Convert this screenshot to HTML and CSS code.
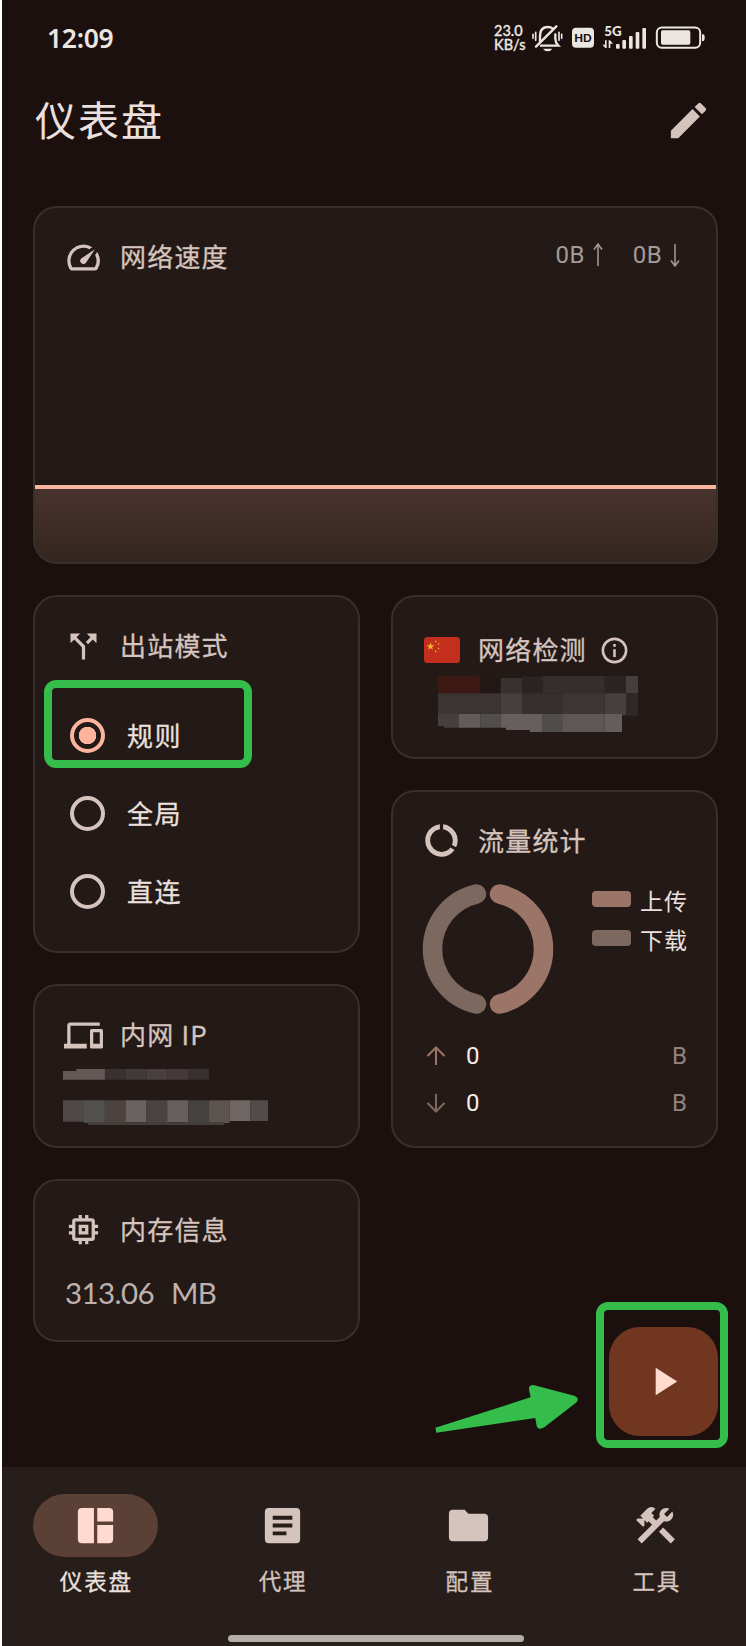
FILE: index.html
```html
<!DOCTYPE html>
<html lang="zh-CN">
<head>
<meta charset="utf-8">
<title>仪表盘</title>
<link rel="stylesheet" href="styles.css">
</head>
<body>
<div class="screen">
  <header class="status">
    <span class="clock">12:09</span>
    <span class="rate"><span>23.0</span><span>KB/s</span></span>
    <svg class="status-icons" viewBox="180 70 525 90" width="175" height="30">
      <g fill="none" stroke="#ebe7e0" stroke-width="5" stroke-linecap="round">
        <path d="M186 104v12M194 98v24M264 98v24M272 104v12"/>
        <path d="M207 126V108C207 91 216 82 231 82c6 0 11 2 15 5M210 138h52c-7-7-9-13-9-20v-14" stroke-width="7"/>
        <path d="M195 141 256 80" stroke-width="7"/>
      </g>
      <path d="M216 147h28q-5 8-14 8t-14-8z" fill="#ebe7e0"/>
      <rect x="303" y="84" width="66" height="60" rx="12" fill="#ebe7e0"/>
      <text x="336" y="126" text-anchor="middle" class="hd">HD</text>
      <text x="400" y="109" class="five-g">5G</text>
      <g fill="#ebe7e0">
        <path d="M402 122h5v23h-4l-9-10h8zM413 145v-23h4l9 10h-8v13z"/>
        <rect x="435" y="133" width="11" height="14" rx="3"/>
        <rect x="454" y="121" width="11" height="26" rx="3"/>
        <rect x="474" y="109" width="11" height="38" rx="3"/>
        <rect x="494" y="97" width="11" height="50" rx="3"/>
        <rect x="514" y="85" width="11" height="62" rx="3"/>
        <rect x="570" y="92" width="88" height="43" rx="5"/>
        <path d="M693 104h3q5 0 5 10t-5 10h-3z"/>
      </g>
      <rect x="557.500" y="83.500" width="130" height="61" rx="15" fill="none" stroke="#ebe7e0" stroke-width="6"/>
    </svg>
  </header>

  <div class="titlebar">
    <h1>仪表盘</h1>
    <svg class="icon-lg" viewBox="0 0 24 24"><path d="M3 17.250V21h3.750L17.810 9.940l-3.750-3.750zM20.710 7.040a1 1 0 0 0 0-1.410l-2.340-2.340a1 1 0 0 0-1.410 0l-1.830 1.830 3.750 3.750z"/></svg>
  </div>

  <main>
    <section class="card speed">
      <div class="head">
        <svg class="icon" viewBox="0 0 24 24"><path d="m20.380 8.570-1.230 1.850a8 8 0 0 1-.22 7.580H5.070A8 8 0 0 1 15.580 6.850l1.850-1.230A10 10 0 0 0 3.350 19a2 2 0 0 0 1.720 1h13.850a2 2 0 0 0 1.740-1 10 10 0 0 0-.27-10.440zm-9.790 6.840a2 2 0 0 0 2.830 0l5.660-8.490-8.490 5.660a2 2 0 0 0 0 2.830z"/></svg>
        <h2>网络速度</h2>
        <div class="rates">
          <span>0B</span><svg viewBox="0 0 10 24" width="10" height="24"><path d="M5 23V1.500M1 6.500 5 1l4 5.500"/></svg>
          <span class="down">0B</span><svg viewBox="0 0 10 24" width="10" height="24"><path d="M5 1v21.500M1 17.500 5 23l4-5.500"/></svg>
        </div>
      </div>
      <div class="chart"></div>
    </section>

    <div class="columns">
      <div class="column">
        <section class="card tall">
          <div class="head">
            <svg class="icon" viewBox="0 0 24 24"><path d="m14 4 2.290 2.290-2.880 2.880 1.420 1.420 2.880-2.880L20 10V4zm-4 0H4v6l2.290-2.290 4.710 4.700V20h2v-8.410l-5.290-5.300z"/></svg>
            <h2>出站模式</h2>
          </div>
          <div class="options">
            <div class="option"><i class="radio on"></i><span>规则</span></div>
            <div class="option"><i class="radio"></i><span>全局</span></div>
            <div class="option"><i class="radio"></i><span>直连</span></div>
          </div>
        </section>

        <section class="card short">
          <div class="head">
            <svg class="icon" viewBox="0 0 24 24"><path d="M4 6h18V4H4a2 2 0 0 0-2 2v11H0v3h14v-3H4zm19 2h-6a1 1 0 0 0-1 1v10a1 1 0 0 0 1 1h6a1 1 0 0 0 1-1V9a1 1 0 0 0-1-1zm-1 9h-4v-7h4z"/></svg>
            <h2>内网 IP</h2>
          </div>
          <svg class="masked-ip" viewBox="188 300 616 168" width="205" height="56">
            <path fill="#645957" d="M188 306h40v-6h86v32H188z"/>
            <path fill="#393130" d="M314 300h62v32h-62zM564 300h63v32h-63z"/>
            <path fill="#403b38" d="M376 300h63v32h-63z"/>
            <path fill="#493f3f" d="M439 300h62v32h-62z"/><path fill="#443a39" d="M501 300h63v32h-63z"/>
            <path fill="#504847" d="M188 394h63v64h-63z"/><path fill="#52504d" d="M251 394h63v68h-63z"/>
            <path fill="#4c4240" d="M314 394h62v74h-62z"/><path fill="#6a6260" d="M376 394h63v66h-63z"/>
            <path fill="#494442" d="M439 394h62v74h-62z"/><path fill="#685e5d" d="M501 394h63v66h-63z"/>
            <path fill="#44413e" d="M564 394h63v74h-63z"/><path fill="#5d5351" d="M627 394h62v68h-62z"/>
            <path fill="#706664" d="M689 394h62v62h-62z"/><path fill="#514c49" d="M751 394h53v62h-53z"/>
            <path fill="#443e3b" d="M264 460h408v8H264z"/>
          </svg>
        </section>

        <section class="card short">
          <div class="head">
            <svg class="icon" viewBox="0 0 24 24"><path d="M15 9H9v6h6zm-2 4h-2v-2h2zm8-2V9h-2V7a2 2 0 0 0-2-2h-2V3h-2v2h-2V3H9v2H7a2 2 0 0 0-2 2v2H3v2h2v2H3v2h2v2a2 2 0 0 0 2 2h2v2h2v-2h2v2h2v-2h2a2 2 0 0 0 2-2v-2h2v-2h-2v-2zm-4 6H7V7h10z"/></svg>
            <h2>内存信息</h2>
          </div>
          <div class="memory"><span>313.06</span><span>MB</span></div>
        </section>
      </div>

      <div class="column">
        <section class="card short detect">
          <div class="head">
            <svg class="flag" viewBox="0 0 36 26" width="36" height="26"><rect width="36" height="26" rx="3.500" fill="#c32f1c"/><g fill="#efb82f"><path d="m6.500 5.500 1 2.700h2.800l-2.200 1.800.8 2.800-2.400-1.700-2.400 1.700.8-2.800-2.200-1.800h2.800z"/><circle cx="11.800" cy="4.600" r=".8"/><circle cx="14.600" cy="7" r=".8"/><circle cx="14.600" cy="11.500" r=".8"/><circle cx="11.800" cy="14.400" r=".8"/></g></svg>
            <h2>网络检测</h2>
            <svg class="info" viewBox="0 0 24 24"><path d="M11 7h2v2h-2zm0 4h2v6h-2zm1-9a10 10 0 1 0 0 20 10 10 0 0 0 0-20zm0 18a8 8 0 1 1 0-16 8 8 0 0 1 0 16z"/></svg>
          </div>
          <svg class="masked-addr" viewBox="195 288 600 168" width="200" height="56">
            <path fill="#3d1914" d="M195 288h115l12 6v46H195z"/>
            <path fill="#211715" d="M322 294h61v46h-61z"/>
            <path fill="#373130" d="M383 294h64v46h-64z"/><path fill="#2c2424" d="M447 290h62v50h-62zM695 288h64v52h-64z"/>
            <path fill="#352e2d" d="M509 288h186v52H509z"/><path fill="#443e3e" d="M759 288h36v52h-36z"/>
            <path fill="#3b3433" d="M195 340h188v62H195z"/><path fill="#463f40" d="M383 340h64v62h-64zM695 340h64v66h-64z"/>
            <path fill="#362e2f" d="M447 340h123v62H447z"/><path fill="#3d3536" d="M570 340h125v62H570z"/><path fill="#302828" d="M759 340h36v67h-36z"/>
            <path fill="#453e3e" d="M195 402h62v41h-45v-5h-17z"/><path fill="#625a5b" d="M257 402h65v41h-65z"/>
            <path fill="#514e4b" d="M322 402h61v41h-61z"/><path fill="#665e5f" d="M383 402h126v54h-38v-6h-72v-7h-16z"/>
            <path fill="#514d4b" d="M509 402h61v54h-61z"/><path fill="#5f5657" d="M570 402h125v54H570z"/><path fill="#655c5d" d="M695 402h52v54h-52z"/>
          </svg>
        </section>

        <section class="card tall traffic">
          <div class="head">
            <svg class="icon" viewBox="0 0 24 24"><path d="M13 2.050v3.030a7 7 0 0 1 5.430 9.620l2.600 1.530A10 10 0 0 0 13 2.050zM12 19a7 7 0 0 1-1-13.930V2.050A10 10 0 1 0 20.080 17.880l-2.590-1.530A7 7 0 0 1 12 19z"/></svg>
            <h2>流量统计</h2>
          </div>
          <div class="usage">
            <svg class="donut" viewBox="0 0 134 132" width="134" height="132"><path d="M55.500 10.900A56.500 56.500 0 0 0 55.500 121.100" stroke="#7c685e"/><path d="M78.500 10.900A56.500 56.500 0 0 1 78.500 121.100" stroke="#9b7567"/></svg>
            <div class="legend">
              <div><i class="up"></i><span>上传</span></div>
              <div><i class="down"></i><span>下载</span></div>
            </div>
          </div>
          <div class="total"><svg viewBox="0 0 20 20" width="20" height="20"><path stroke="#9b7567" d="M10 19V2M1.500 10 10 1.500 18.500 10"/></svg><span>0</span><b>B</b></div>
          <div class="total"><svg viewBox="0 0 20 20" width="20" height="20"><path stroke="#7c685e" d="M10 1v17M1.500 10l8.500 8.500 8.500-8.500"/></svg><span>0</span><b>B</b></div>
        </section>
      </div>
    </div>
  </main>

  <button class="fab" aria-label="启动"><svg class="icon-lg" viewBox="0 0 24 24"><path d="M8 5v14l11-7z"/></svg></button>

  <div class="mark mark-rule"></div>
  <div class="mark mark-start"></div>
  <svg class="arrow" viewBox="46 312 430 148" width="143.300" height="49.300"><path d="M47 443 333 352 328 328Q327 315 341 315L464 347Q480 353 471 367L374 442Q356 453 351 437L347 414 50 458z"/></svg>

  <nav>
    <div class="tabs">
      <a class="tab active"><span class="pill"><svg class="icon-lg" viewBox="0 0 24 24"><path d="M11.200 21H5a2 2 0 0 1-2-2V5a2 2 0 0 1 2-2h6.200zM12.900 21H19a2 2 0 0 0 2-2v-7.200h-8.100zM21 10V5a2 2 0 0 0-2-2h-6.100v7z"/></svg></span><span>仪表盘</span></a>
      <a class="tab"><span class="pill"><svg class="icon-lg" viewBox="0 0 24 24"><path d="M19 3H5a2 2 0 0 0-2 2v14a2 2 0 0 0 2 2h14a2 2 0 0 0 2-2V5a2 2 0 0 0-2-2zm-5 14H7v-2h7zm3-4H7v-2h10zm0-4H7V7h10z"/></svg></span><span>代理</span></a>
      <a class="tab"><span class="pill"><svg class="icon-lg" viewBox="0 0 24 24"><path d="M10 4H4a2 2 0 0 0-2 2v12a2 2 0 0 0 2 2h16a2 2 0 0 0 2-2V8a2 2 0 0 0-2-2h-8z"/></svg></span><span>配置</span></a>
      <a class="tab"><span class="pill"><svg class="icon-lg" viewBox="0 0 24 24"><path d="m13.783 15.172 2.121-2.121 5.996 5.996-2.121 2.121zM17.500 10c1.930 0 3.500-1.570 3.500-3.500 0-.58-.16-1.120-.41-1.600l-2.700 2.700-1.490-1.490 2.700-2.700c-.48-.25-1.020-.41-1.600-.41C15.570 3 14 4.570 14 6.500c0 .41.08.8.21 1.160l-1.850 1.850-1.780-1.780.71-.71-1.410-1.410L12 3.490a3 3 0 0 0-4.240 0L4.220 7.030l1.410 1.410H2.810l-.71.71 3.540 3.540.71-.71V9.150l1.410 1.410.71-.71 1.780 1.780-7.410 7.410 2.120 2.120L16.340 9.790c.36.13.75.21 1.160.21z"/></svg></span><span>工具</span></a>
    </div>
    <div class="home"></div>
  </nav>
</div>
</body>
</html>
```

FILE: styles.css
```css
* { box-sizing: border-box; }
body { margin: 0; background: #fff; }
svg { display: block; flex: none; }
h1, h2 { margin: 0; font-weight: 400; white-space: nowrap; }

.screen {
  position: relative;
  display: flex;
  flex-direction: column;
  height: 1646px;
  margin-left: 2px;
  overflow: hidden;
  background: #1b100e;
  color: #ebe0dd;
  font-family: "Noto Sans CJK SC", sans-serif;
}

.icon { width: 39px; height: 39px; fill: #d5c3bd; }
.icon-lg { width: 47px; height: 47px; fill: #d5c3bd; }

/* Status bar */
.status { display: flex; align-items: center; height: 76px; padding: 0 40px 0 45px; color: #ebe7e0; }
.clock { font: 600 26.500px/30px "Noto Sans", sans-serif; letter-spacing: -0.300px; }
.rate { display: flex; flex-direction: column; margin-left: auto; width: 31px; font: 500 14.500px/14px Lato, sans-serif; white-space: nowrap; -webkit-text-stroke: 0.300px; }
.status-icons { margin-left: 6px; }
.hd { font: 900 34px Lato, sans-serif; fill: #1b100e; }
.five-g { font: 900 40px Lato, sans-serif; fill: #ebe7e0; }

.titlebar { display: flex; align-items: center; justify-content: space-between; height: 89px; padding: 0 34px 0 33px; }
h1 { margin-top: -6px; font-size: 41px; line-height: 60px; letter-spacing: 2px; }

/* Cards */
main { flex: 1; min-height: 0; padding: 41px 28px 0 31px; }
.card { overflow: hidden; border: 2px solid #37302d; border-radius: 24px; background: #231917; }
.head { display: flex; align-items: center; height: 40px; margin: 29px 29px 0; color: #d5c3bd; }
h2 { margin: -2px 0 0 17px; font-size: 26px; line-height: 40px; letter-spacing: 1.200px; -webkit-text-stroke: 0.300px; }

.speed { display: flex; flex-direction: column; height: 358px; }
.rates { display: flex; align-items: center; margin: -4px 7px 0 auto; color: #a59b98; font: 24px/30px Roboto, sans-serif; letter-spacing: 0.400px; }
.rates svg { margin-left: 8px; fill: none; stroke: #a59b98; stroke-width: 1.500; }
.rates .down { margin-left: 30px; }
.chart { height: 77px; margin-top: auto; border-top: 4px solid #f9b49e; background: linear-gradient(#48322d, #352620); }

.columns { display: grid; grid-template-columns: 327px 327px; gap: 31px; margin-top: 31px; }
.column { display: flex; flex-direction: column; gap: 31px; }
.tall { height: 358px; }
.short { height: 163.500px; }

.options { display: flex; flex-direction: column; margin-top: 30px; padding-left: 35px; }
.option { display: flex; align-items: center; gap: 22px; height: 78px; font-size: 26px; letter-spacing: 1.600px; -webkit-text-stroke: 0.300px; }
.option span { line-height: 38px; }
.radio { width: 35px; height: 35px; border: 4px solid #d5c3bd; border-radius: 50%; }
.radio.on { border-color: #fcb59c; background: radial-gradient(circle, #fcb59c 8.500px, transparent 9px); }

.masked-ip { margin: 14px 0 0 28px; }
.memory { display: flex; gap: 17px; margin: 23px 0 0 30px; color: #bfb2ae; font: 29.500px/40px Lato, sans-serif; letter-spacing: -0.600px; }

.detect .head { margin-top: 33px; margin-left: 31px; }
.detect h2 { margin-left: 18px; }
.info { width: 31px; height: 31px; margin-left: 12px; fill: #d5c3bd; }
.masked-addr { margin: 6px 0 0 45px; }

.traffic .head { margin-top: 29px; }
.usage { display: flex; justify-content: space-between; margin: 22px 28px 0 28px; }
.donut { fill: none; stroke-width: 19.500; stroke-linecap: round; }
.legend { margin-top: -1px; }
.legend div { display: flex; align-items: center; gap: 9px; height: 39px; font-size: 23px; line-height: 32px; letter-spacing: 1px; }
.legend span { margin-top: -3px; }
.legend i { width: 39px; height: 16px; margin-top: -4px; border-radius: 4px; }
.legend .up { background: #9b7567; }
.legend .down { background: #7c685e; }
.total { display: flex; align-items: center; height: 47px; margin: 0 29px 0 33px; color: #f5ebe8; font: 24px/30px Roboto, sans-serif; }
.usage + .total { margin-top: 18px; }
.total svg { fill: none; stroke-width: 2; }
.total span { margin-left: 20px; }
.total b { margin-left: auto; font-weight: 400; color: #91827e; }

/* Floating button and annotations */
.fab { position: absolute; left: 607px; top: 1327px; display: grid; place-items: center; width: 109px; height: 109px; padding: 0; border: 0; border-radius: 31px; background: #703620; }
.fab .icon-lg { fill: #ffdbcf; }
.mark { position: absolute; border: 8px solid #35bd4b; border-radius: 12px; }
.mark-rule { left: 42px; top: 680px; width: 208px; height: 88px; }
.mark-start { left: 594px; top: 1302px; width: 132px; height: 146px; }
.arrow { position: absolute; left: 433px; top: 1384px; fill: #35bd4b; }

/* Bottom navigation */
nav { display: flex; flex-direction: column; flex: none; height: 179px; padding-top: 27px; background: #271e1b; }
.tabs { display: grid; grid-template-columns: repeat(4, 186.800px); }
.tab { display: flex; flex-direction: column; align-items: center; color: #d5c3bd; font-size: 22.500px; line-height: 34px; letter-spacing: 1.800px; -webkit-text-stroke: 0.300px; }
.tab > span + span { margin: 6px -1.800px 0 0; }
.pill { display: grid; place-items: center; width: 125px; height: 63px; border-radius: 32px; }
.active { color: #ebe0dd; }
.active .pill { background: #5b4035; }
.active .icon-lg { fill: #ffdbcf; }
.home { width: 296px; height: 7px; margin: auto 0 4px 226px; border-radius: 4px; background: #b3aeaa; }
```
